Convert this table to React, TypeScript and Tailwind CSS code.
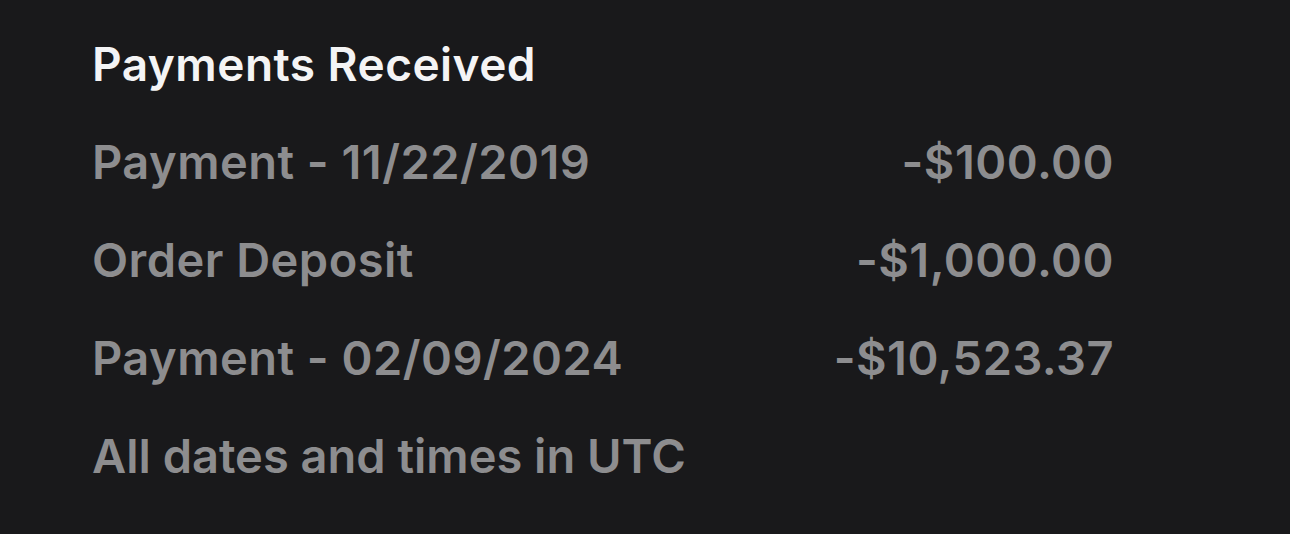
const rows = [
  { label: "Payment - 11/22/2019", amount: "-$100.00" },
  { label: "Order Deposit", amount: "-$1,000.00" },
  { label: "Payment - 02/09/2024", amount: "-$10,523.37" },
];

export default function App() {
  return (
    <div
      className="h-[534px] w-[1290px] bg-[#19191b] pt-[15px] pl-[92px]"
      style={{ fontFamily: "Inter, 'Noto Sans', sans-serif" }}
    >
      <div className="w-[1022px]">
        <h2 className="text-[46px] leading-[98px] font-semibold tracking-[0.01em] text-[#f4f4f5]">
          Payments Received
        </h2>
        {rows.map((row) => (
          <div
            key={row.label}
            className="flex items-center justify-between text-[47px] leading-[98px] font-semibold tracking-[0.01em] text-[#8d8d8f]"
          >
            <span>{row.label}</span>
            <span>{row.amount}</span>
          </div>
        ))}
        <p className="text-[47px] leading-[98px] font-semibold text-[#8d8d8f]">
          All dates and times in UTC
        </p>
      </div>
    </div>
  );
}
